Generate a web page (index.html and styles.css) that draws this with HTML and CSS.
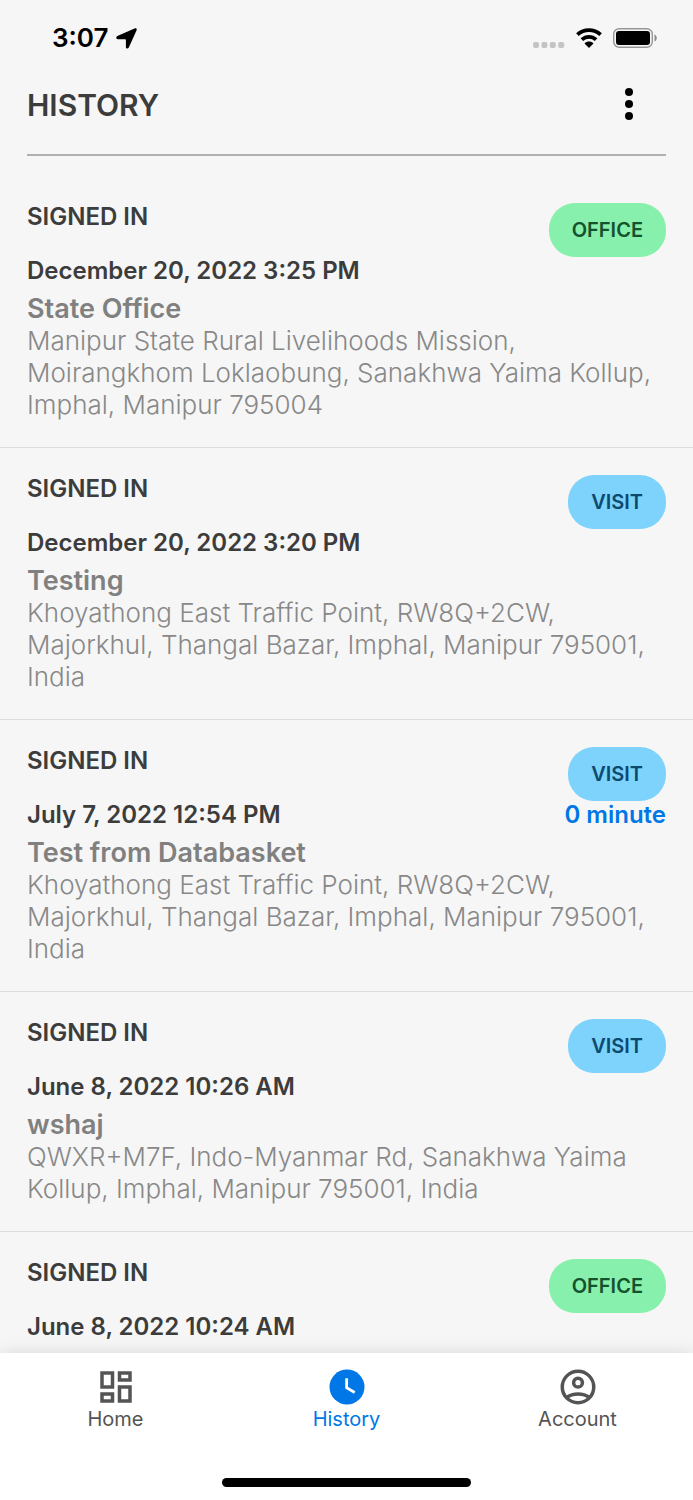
FILE: index.html
```html
<!DOCTYPE html>
<html lang="en">
<head>
<meta charset="utf-8">
<meta name="viewport" content="width=device-width, initial-scale=1">
<title>History</title>
<link rel="stylesheet" href="styles.css">
</head>
<body>
<div class="app">
  <div class="status-bar">
    <div class="status-time">
      <span>3:07</span>
      <svg width="21" height="21" viewBox="0 0 21 21" aria-hidden="true"><path d="M18.500 .5C20.200 -.2 21.200 .9 20.500 2.500L12.800 19.500C12 21.200 9.900 20.800 9.900 19V11.900C9.900 11.400 9.700 11.200 9.200 11.200H1.900C0 11.200 -.4 8.900 1.400 8.100Z"/></svg>
    </div>
    <div class="status-icons">
      <svg width="32" height="20" viewBox="0 0 32 20" fill="#c4c4c4" aria-hidden="true"><rect y="14" width="6" height="6" rx="2"/><rect x="8.400" y="14" width="6" height="6" rx="2"/><rect x="16.800" y="14" width="6" height="6" rx="2"/><rect x="25.200" y="14" width="6" height="6" rx="2"/></svg>
      <svg width="26" height="20" viewBox="0 0 26 20" aria-hidden="true"><path d="M1.400 6.600C8 .5 18 .5 24.600 6.600M5.900 11.700C10 7.900 16 7.900 20.100 11.700" fill="none" stroke="#000" stroke-width="3.800"/><path d="M13 20 8.500 15.400C11 13 15 13 17.500 15.400Z"/></svg>
      <svg width="44" height="20" viewBox="0 0 44 20" aria-hidden="true"><rect x=".7" y=".7" width="38.600" height="18.600" rx="5.500" fill="none" stroke="#969696" stroke-width="1.400"/><rect x="3" y="3" width="34" height="14" rx="3"/><path d="M41.500 6.500C44.500 7.500 44.500 12.500 41.500 13.500Z" fill="#8c8c8c"/></svg>
    </div>
  </div>
  <header class="page-header">
    <h1 class="page-title">HISTORY</h1>
    <button class="menu-button" type="button" aria-label="More options">
      <svg width="8" height="32" viewBox="0 0 8 32" aria-hidden="true"><circle cx="4" cy="4" r="4"/><circle cx="4" cy="16" r="4"/><circle cx="4" cy="28" r="4"/></svg>
    </button>
  </header>
  <main class="history">
    <article class="entry">
      <div class="entry-top">
        <div class="entry-when"><h2 class="entry-status">SIGNED IN</h2><time class="entry-date">December 20, 2022 3:25 PM</time></div>
        <div class="entry-side"><span class="badge badge-office">OFFICE</span></div>
      </div>
      <h3 class="entry-name">State Office</h3>
      <p class="entry-address">Manipur State Rural Livelihoods Mission, Moirangkhom Loklaobung, Sanakhwa Yaima Kollup, Imphal, Manipur 795004</p>
    </article>
    <article class="entry">
      <div class="entry-top">
        <div class="entry-when"><h2 class="entry-status">SIGNED IN</h2><time class="entry-date">December 20, 2022 3:20 PM</time></div>
        <div class="entry-side"><span class="badge badge-visit">VISIT</span></div>
      </div>
      <h3 class="entry-name">Testing</h3>
      <p class="entry-address">Khoyathong East Traffic Point, RW8Q+2CW, Majorkhul, Thangal Bazar, Imphal, Manipur 795001, India</p>
    </article>
    <article class="entry">
      <div class="entry-top">
        <div class="entry-when"><h2 class="entry-status">SIGNED IN</h2><time class="entry-date">July 7, 2022 12:54 PM</time></div>
        <div class="entry-side"><span class="badge badge-visit">VISIT</span><span class="duration">0 minute</span></div>
      </div>
      <h3 class="entry-name">Test from Databasket</h3>
      <p class="entry-address">Khoyathong East Traffic Point, RW8Q+2CW, Majorkhul, Thangal Bazar, Imphal, Manipur 795001, India</p>
    </article>
    <article class="entry">
      <div class="entry-top">
        <div class="entry-when"><h2 class="entry-status">SIGNED IN</h2><time class="entry-date">June 8, 2022 10:26 AM</time></div>
        <div class="entry-side"><span class="badge badge-visit">VISIT</span></div>
      </div>
      <h3 class="entry-name">wshaj</h3>
      <p class="entry-address">QWXR+M7F, Indo-Myanmar Rd, Sanakhwa Yaima Kollup, Imphal, Manipur 795001, India</p>
    </article>
    <article class="entry">
      <div class="entry-top">
        <div class="entry-when"><h2 class="entry-status">SIGNED IN</h2><time class="entry-date">June 8, 2022 10:24 AM</time></div>
        <div class="entry-side"><span class="badge badge-office">OFFICE</span></div>
      </div>
    </article>
  </main>
  <footer class="bottom">
    <nav class="tabs">
      <a class="tab" href="#home">
        <svg width="42" height="42" viewBox="0 0 24 24" aria-hidden="true"><path fill="currentColor" d="M19 5v2h-4V5h4M9 5v6H5V5h4m10 8v6h-4v-6h4M9 17v2H5v-2h4M21 3h-8v6h8V3zM11 3H3v10h8V3zm10 8h-8v10h8V11zm-10 4H3v6h8v-6z"/></svg>
        <span>Home</span>
      </a>
      <a class="tab tab-active" href="#history" aria-current="page">
        <svg width="42" height="42" viewBox="0 0 24 24" aria-hidden="true"><circle cx="12" cy="12" r="10" fill="currentColor"/><path d="M11.800 7v5.400l4.600 2.700" fill="none" stroke="#fff" stroke-width="1.600"/></svg>
        <span>History</span>
      </a>
      <a class="tab" href="#account">
        <svg width="42" height="42" viewBox="0 0 24 24" fill="none" stroke="currentColor" stroke-width="2" aria-hidden="true"><circle cx="12" cy="12" r="9"/><circle cx="12" cy="9.500" r="2.500"/><path d="M5.500 18C9 15.300 15 15.300 18.500 18"/></svg>
        <span>Account</span>
      </a>
    </nav>
    <div class="home-indicator"></div>
  </footer>
</div>
</body>
</html>
```

FILE: styles.css
```css
* {
  box-sizing: border-box;
}

body,
h1,
h2,
h3,
p {
  margin: 0;
}

body {
  background: #f6f6f6;
  color: #3c3c3c;
  font-family: Inter, "Liberation Sans", sans-serif;
}

.app {
  display: flex;
  flex-direction: column;
  height: 100vh;
}

.status-bar {
  display: flex;
  justify-content: space-between;
  align-items: center;
  padding: 22px 36px 0 52px;
  color: #000;
}

.status-time {
  display: flex;
  align-items: center;
  gap: 8px;
  font-size: 26px;
  font-weight: 600;
  line-height: 32px;
}

.status-icons {
  display: flex;
  align-items: center;
  gap: 11px;
}

.page-header {
  display: flex;
  justify-content: space-between;
  align-items: center;
  height: 102px;
  margin: 0 27px;
  padding-top: 2px;
  border-bottom: 2px solid #b0b0b0;
}

.page-title {
  font-size: 30px;
  font-weight: 600;
  line-height: 36px;
}

.menu-button {
  display: flex;
  padding: 8px 33px;
  margin-bottom: 2px;
  border: 0;
  background: none;
  cursor: pointer;
}

.history {
  flex: 1;
  min-height: 0;
  overflow: hidden;
  padding-top: 20px;
}

.entry {
  padding: 27px 27px 26px;
  border-bottom: 1px solid #dedede;
}

.entry-top {
  display: flex;
  justify-content: space-between;
}

.entry-when {
  display: flex;
  flex-direction: column;
  gap: 26px;
}

.entry-status,
.entry-date,
.duration {
  font-size: 24px;
  font-weight: 600;
  line-height: 28px;
}

.entry-side {
  display: flex;
  flex-direction: column;
  align-items: flex-end;
}

.badge {
  padding: 0 23px;
  border-radius: 26px;
  font-size: 20px;
  font-weight: 600;
  line-height: 54px;
}

.badge-office {
  background: #88f0ad;
  color: #14532d;
}

.badge-visit {
  background: #7dd3fc;
  color: #0c4a6e;
}

.duration {
  color: #0077e6;
}

.entry-name {
  margin-top: 8px;
  color: #808080;
  font-size: 27px;
  font-weight: 600;
  line-height: 32px;
}

.entry-address {
  color: #888;
  font-size: 26px;
  font-weight: 300;
  line-height: 32px;
}

.bottom {
  display: flex;
  flex-direction: column;
  align-items: center;
  gap: 48px;
  padding: 13px 0;
  background: #fff;
  box-shadow: 0 0 16px rgba(0, 0, 0, 0.12);
}

.tabs {
  display: flex;
  width: 100%;
}

.tab {
  display: flex;
  flex: 1;
  flex-direction: column;
  align-items: center;
  color: #545454;
  font-size: 20px;
  line-height: 22px;
  text-decoration: none;
}

.tab-active {
  color: #0077e6;
}

.home-indicator {
  width: 36%;
  height: 9px;
  border-radius: 5px;
  background: #000;
}
```
